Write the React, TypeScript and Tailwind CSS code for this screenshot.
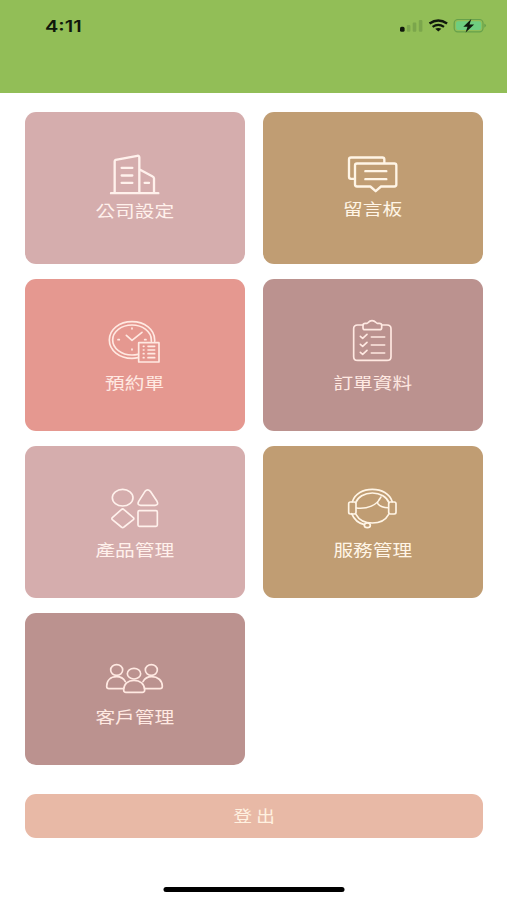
import type { ReactNode } from "react";

type CardProps = { label: string; tone: string; offset: string; children: ReactNode };

const FONT = "font-['Noto_Sans_CJK_TC',sans-serif]";

function Card({ label, tone, offset, children }: CardProps) {
  return (
    <button className={`flex h-[152px] flex-col items-center rounded-[11px] pt-[38px] ${tone}`}>
      {children}
      <span className={`block scale-x-[1.2] whitespace-nowrap text-[16.4px] leading-6 ${FONT} ${offset}`}>{label}</span>
    </button>
  );
}

function Icon({ viewBox, width = 5, children }: { viewBox: string; width?: number; children: ReactNode }) {
  return (
    <svg
      className="h-[50px] w-[60px] shrink-0"
      viewBox={viewBox}
      fill="none"
      stroke="currentColor"
      strokeWidth={width}
      strokeLinecap="round"
      strokeLinejoin="round"
    >
      {children}
    </svg>
  );
}

function StatusBar() {
  return (
    <header className="flex h-[93px] items-start justify-between bg-[#92be57] pl-[45px] pr-[20px] text-[#10180c]">
      <span className="mt-[14px] block origin-left scale-x-[1.25] font-['Inter',sans-serif] text-[16px] font-semibold leading-6">
        4:11
      </span>
      <svg className="mt-[15px] h-[22px] w-[88px]" viewBox="399 15 88 22" fill="none">
        <rect x="400" y="26.8" width="4.6" height="5" rx="1.6" fill="#10180c" />
        <g fill="#7ba64c">
          <rect x="406.8" y="25" width="3.6" height="6.8" rx="1" />
          <rect x="412.7" y="22.5" width="3.6" height="9.3" rx="1" />
          <rect x="418.8" y="20" width="3.6" height="11.8" rx="1" />
        </g>
        <g stroke="#10180c">
          <path d="M429.5 23.6q8.8-6.2 17.6 0" strokeWidth="2.4" />
          <path d="M432.6 26.8q5.7-4 11.4 0" strokeWidth="2.2" />
        </g>
        <path d="M435.2 28.8q3.1-1.8 6.2 0l-3.1 2.6z" fill="#10180c" />
        <rect x="454.2" y="19.5" width="28.8" height="12.3" rx="3.6" stroke="#66a14b" strokeWidth="1.2" />
        <rect x="456" y="21.2" width="25.2" height="8.9" rx="2" fill="#6fce80" />
        <path d="M484.3 23.4q3.4 2.2 0 4.4z" fill="#66a14b" />
        <path d="M471.3 18.9l-8 7.8h4.2l-1.9 5.9 8.5-8h-4.6z" fill="#10180c" />
      </svg>
    </header>
  );
}

const pink = "bg-[#d5adad] text-[#fff1ec]";
const brown = "bg-[#c09d73] text-[#fff5e6]";
const coral = "bg-[#e59890] text-[#ffe9e2]";
const mauve = "bg-[#bb928f] text-[#ffe9e2]";

export default function App() {
  return (
    <div className="flex h-[900px] w-[507px] flex-col bg-white">
      <StatusBar />
      <main className="flex flex-col pl-[25px] pr-6 pt-[18.5px]">
        <div className="grid grid-cols-[220px_220px] gap-x-[18px] gap-y-[15px]">
          <Card label="公司設定" tone={pink} offset="-mt-[1.5px]">
            <Icon viewBox="75 28.5 180 150" width={7}>
              <path d="M93 158H235M104 157V62q0-3 3-4l65-12q6-1 6 5V157M179 87l39 21q4 2 4 6V157" />
              <path d="M125 82h32M125 105h32M125 127h32M194 127h13" />
            </Icon>
          </Card>
          <Card label="留言板" tone={brown} offset="-mt-[3.5px]">
            <Icon viewBox="54 28.5 180 150" width={7}>
              <path d="M88 115H78q-6 0-6-6V57q0-6 6-6h94q6 0 6 6v10" />
              <path d="M96 69h112q6 0 6 6v57q0 6-6 6h-40l-16 14-16-14H96q-6 0-6-6V75q0-6 6-6z" />
              <path d="M121 92h63M121 116h63" />
            </Icon>
          </Card>
          <Card label="預約單" tone={coral} offset="mt-[3.5px]">
            <Icon viewBox="75 21 180 150" width={5}>
              <path d="M174 143q-9 2-18 2c-38 0-68-24-68-55s30-55 68-55 68 24 68 55v4" strokeWidth={5} />
              <path d="M174 133q-9 2-18 2c-32 0-58-20-58-45s26-45 58-45 58 20 58 45v4" strokeWidth={5} />
              <path d="M139 76l17 15 30-24" strokeWidth={5} />
              <path d="M156 54v3M156 117v3M114 89h4M194 89h4" />
              <rect x="176" y="98" width="61" height="58" rx="1" strokeWidth={5} />
              <path d="M190 109h2M204 109h20M190 120h2M204 120h20M190 131h2M204 131h20M190 143h2M204 143h20" strokeWidth={5} />
            </Icon>
          </Card>
          <Card label="訂單資料" tone={mauve} offset="mt-[3.5px]">
            <Icon viewBox="54 21 180 150">
              <path d="M114 45H98q-12 0-12 11v84q0 11 12 11h88q12 0 12-11V56q0-11-12-11h-16" />
              <path d="M120 59q-6 0-6-6v-7q0-6 7-6h5c4 0 4-8 15-8s12 8 16 8h6q7 0 7 6v7q0 6-6 6z" />
              <path d="M106 79l7 6 13-12M106 103l7 6 13-12M106 127l7 6 13-12M139 81h40M139 105h40M139 129h40" />
            </Icon>
          </Card>
          <Card label="產品管理" tone={pink} offset="mt-[3.5px]">
            <Icon viewBox="75 27 180 150">
              <ellipse cx="128" cy="68" rx="31" ry="25" />
              <path d="M195 49q8-9 16 0l20 30q6 11-6 12h-43q-12-1-6-12z" />
              <path d="M124 104q4-4 8 0l28 24q3 3 0 6l-28 22q-4 4-8 0l-27-22q-3-3 0-6z" />
              <rect x="174" y="107" width="58" height="47" rx="4" />
            </Icon>
          </Card>
          <Card label="服務管理" tone={brown} offset="mt-[3.5px]">
            <Icon viewBox="54 27 180 150">
              <path d="M82 80c8-24 32-37 60-37s52 13 60 37" />
              <path d="M92 83c6-17 26-29 50-29s44 12 50 29" />
              <path d="M93 118c8 15 26 26 49 26s41-11 49-26M80 116c7 17 20 29 38 33" />
              <rect x="71" y="81" width="22" height="36" rx="5" />
              <rect x="191" y="81" width="22" height="36" rx="5" />
              <path d="M94 99c33 4 62-8 74-33-9 11-12 18-9 21 6 7 20 11 31 11" strokeWidth={4.5} />
              <ellipse cx="127" cy="151" rx="9" ry="7" />
            </Icon>
          </Card>
          <Card label="客戶管理" tone={mauve} offset="mt-[3.5px]">
            <Icon viewBox="75 3 180 150">
              <ellipse cx="110" cy="60" rx="18" ry="16" />
              <ellipse cx="214" cy="60" rx="18" ry="16" />
              <ellipse cx="162" cy="71" rx="20" ry="16" />
              <path d="M130 116H87q-7 0-7-7c0-18 12-29 30-29q18 0 26 15M194 116h46q7 0 7-7c0-18-14-29-32-29q-18 0-26 15" />
              <path d="M138 127q-7 0-7-7c0-18 13-29 31-29s32 11 32 29q0 7-7 7z" />
            </Icon>
          </Card>
        </div>
        <button className="mt-[29px] flex h-11 items-center justify-center rounded-[11px] bg-[#e8b9a6] pb-[2px] text-[#fff1e0]">
          <span className={`block scale-x-[1.2] text-[15.5px] leading-6 ${FONT}`}>登 出</span>
        </button>
      </main>
      <div className="mt-auto mb-[8px] h-[5px] w-[181px] translate-x-[0.5px] self-center rounded-full bg-black" />
    </div>
  );
}
